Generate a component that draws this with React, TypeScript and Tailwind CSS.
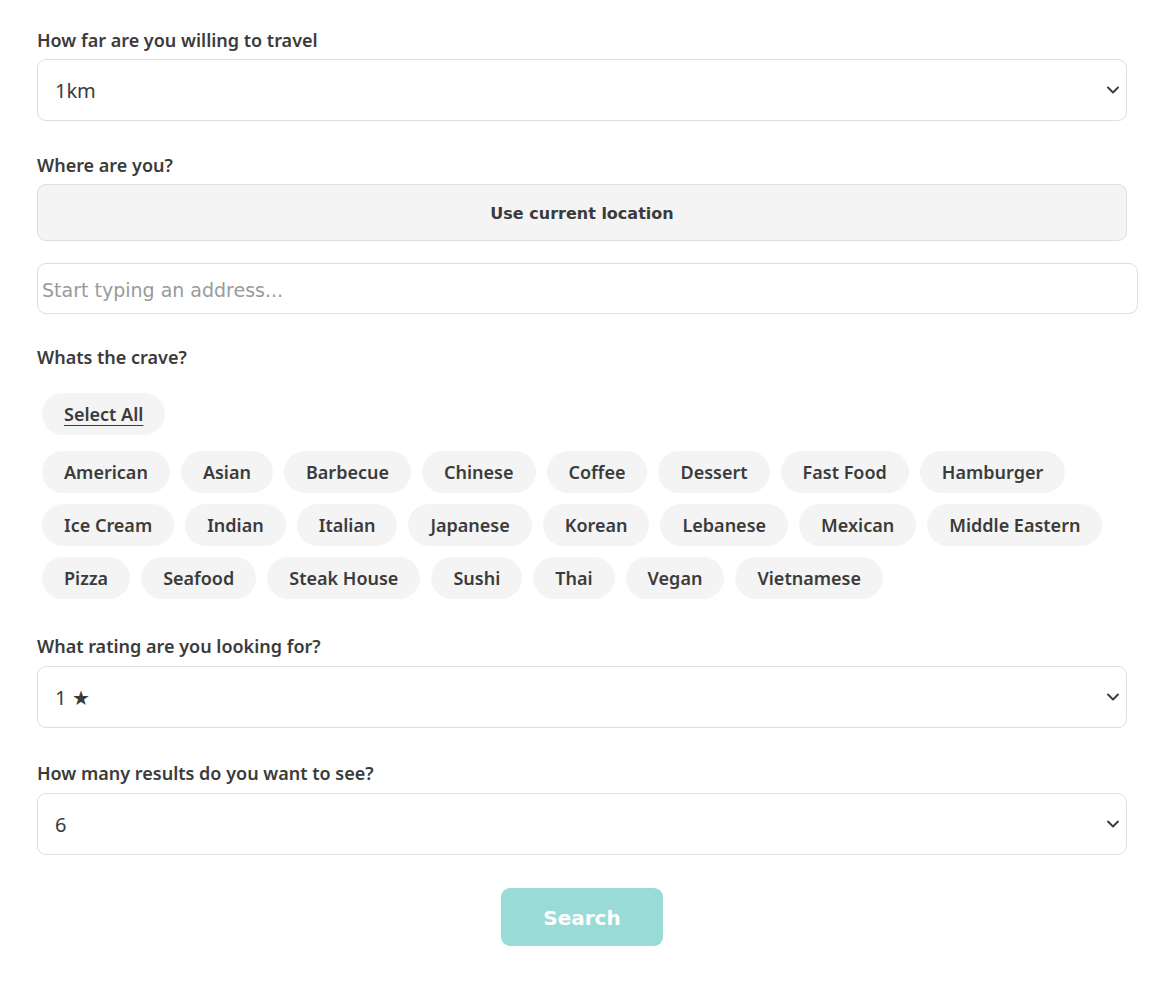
import { ChevronDown } from 'lucide-react'

const cuisines = [
  'American', 'Asian', 'Barbecue', 'Chinese', 'Coffee', 'Dessert', 'Fast Food', 'Hamburger',
  'Ice Cream', 'Indian', 'Italian', 'Japanese', 'Korean', 'Lebanese', 'Mexican', 'Middle Eastern',
  'Pizza', 'Seafood', 'Steak House', 'Sushi', 'Thai', 'Vegan', 'Vietnamese',
]

const labelCls = 'block text-[18px] leading-[22px] font-semibold text-[#3b3b3b]'

function Select({ value }: { value: string }) {
  return (
    <div className="relative">
      <select
        defaultValue={value}
        className="h-[62px] w-full appearance-none rounded-[9px] border border-[#dedede] bg-white pl-[17px] pt-[2px] text-[20px] text-[#3b3b3b] outline-none"
      >
        <option>{value}</option>
      </select>
      <ChevronDown className="pointer-events-none absolute right-[4px] top-1/2 h-[20px] w-[20px] -translate-y-1/2 text-[#3b3b3b]" strokeWidth={2.3} />
    </div>
  )
}

export default function App() {
  return (
    <div className="min-h-screen bg-white font-['Noto_Sans',sans-serif]">
      <div className="w-[1090px] ml-[37px] pt-[29px]">
        <label className={labelCls}>How far are you willing to travel</label>
        <div className="mt-[8px]"><Select value="1km" /></div>

        <label className={`${labelCls} mt-[33px]`}>Where are you?</label>
        <button
          type="button"
          className="mt-[8px] h-[57px] w-full rounded-[9px] border border-[#dedede] bg-[#f4f4f4] pt-[2px] font-['DejaVu_Sans',sans-serif] text-[16px] font-bold text-[#3b3b3b]"
        >
          Use current location
        </button>
        <input
          placeholder="Start typing an address..."
          className="mt-[22px] h-[51px] w-[1101px] rounded-[9px] border border-[#dedede] px-[4px] pt-[3px] font-['DejaVu_Sans',sans-serif] text-[19px] text-[#3b3b3b] outline-none placeholder:text-[#9a9a9a]"
        />

        <label className={`${labelCls} mt-[32px]`}>Whats the crave?</label>
        <div className="mt-[25px] px-[5px]">
          <button type="button" className="h-[42px] rounded-full bg-[#f4f4f4] px-[22px] text-[18px] font-semibold text-[#3b3b3b] underline underline-offset-[4px]">
            Select All
          </button>
          <div className="mt-[16px] flex flex-wrap gap-x-[11px] gap-y-[11px]">
            {cuisines.map((c) => (
              <button key={c} type="button" className="h-[42px] rounded-full bg-[#f4f4f4] px-[22px] pt-[1px] text-[18px] font-semibold text-[#3b3b3b]">
                {c}
              </button>
            ))}
          </div>
        </div>

        <label className={`${labelCls} mt-[36px]`}>What rating are you looking for?</label>
        <div className="mt-[9px]"><Select value="1 ★" /></div>

        <label className={`${labelCls} mt-[34px]`}>How many results do you want to see?</label>
        <div className="mt-[9px]"><Select value="6" /></div>

        <div className="mt-[33px] flex justify-center">
          <button type="button" className="h-[58px] w-[162px] rounded-[9px] bg-[#99dbd6] pt-[2px] font-['DejaVu_Sans',sans-serif] text-[20px] font-bold text-white">
            Search
          </button>
        </div>
      </div>
    </div>
  )
}
